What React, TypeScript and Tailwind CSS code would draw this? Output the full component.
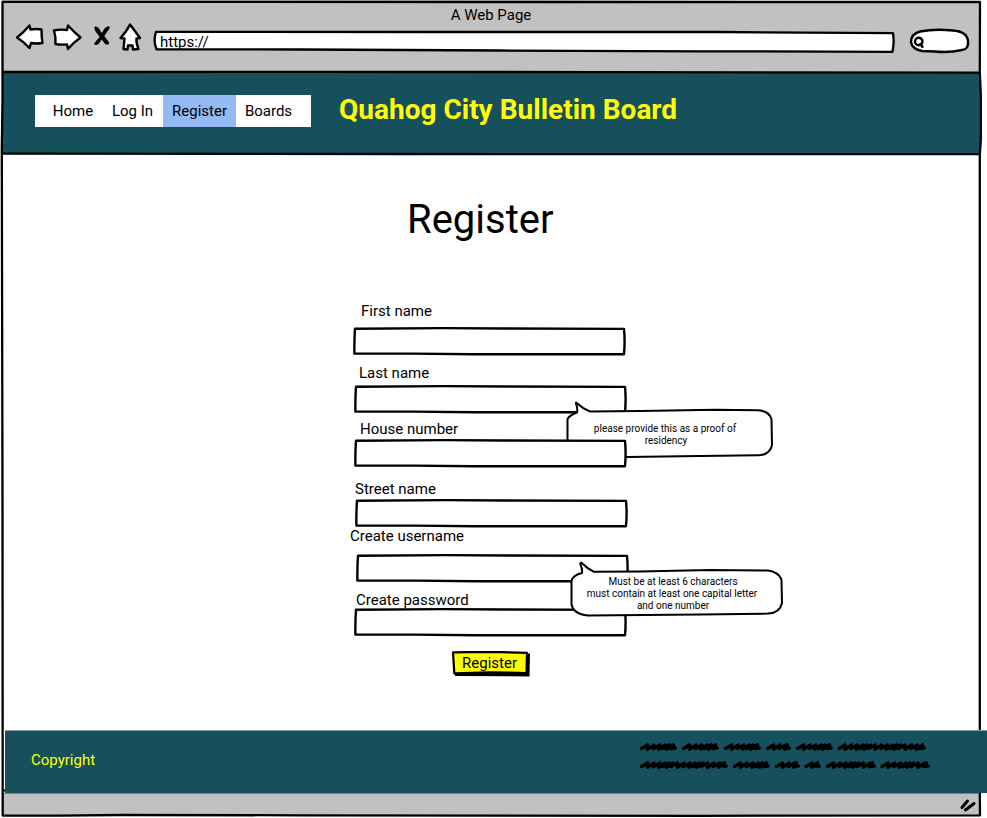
import type { ReactNode } from "react";

function Toolbar() {
  return (
    <header className="h-[72px] shrink-0 bg-[#c1c1c1]">
      <div className="flex h-[30px] items-center justify-center">
        <span className="leading-[18px]">A Web Page</span>
      </div>
      <div className="-mt-[9px] flex items-start">
        <svg className="ml-[13px] h-[34px] w-[128px] shrink-0" viewBox="15 21 128 34" fill="white" stroke="black" strokeWidth="2.4" strokeLinejoin="round" strokeLinecap="round">
          <path d="M17 37.5 Q23 33 29.5 25.5 L30.5 29.5 Q37 28.5 41.5 29.5 Q41.5 37 42.5 43 Q36 44 31 43 L29.5 48 Q24 42 17 37.5 Z" />
          <path d="M54 30.5 Q60 29 67 30 L68 25.5 Q74 32 80.5 37.5 Q74 42 68 49 L67 44.5 Q60 45 55.5 44 Q56 37 54 30.5 Z" />
          <g fill="black" stroke="none">
            <path d="M94.8 26.4 Q98.5 26.2 100.8 31.5 L103.2 34.5 L109.2 42.5 Q108.8 46 105.2 44 L101 38.5 L95.6 31.5 Q93.8 28 94.8 26.4 Z" />
            <path d="M109.7 26.4 Q110 29 107 32 L103.5 37 L98.5 44 Q95 46.3 94 43.5 L100 36.5 L104.2 29 Q106.5 25.6 109.7 26.4 Z" />
          </g>
          <path d="M130 24.5 Q135 31 140 38 L136.5 38.5 Q136 43 138.5 49 L133 49.5 L132.5 45.5 L128 45.5 L127.5 49.5 L123.5 49 Q124 43 124.5 38.5 L120.5 38 Q127 31 130 24.5 Z" />
        </svg>
        <div className="relative ml-[11px] mt-[9px] h-[22px] w-[740px] shrink-0">
          <svg className="absolute inset-0 h-full w-full overflow-visible" viewBox="154 30 740 22" fill="white" stroke="black" strokeWidth="2.3" strokeLinejoin="round">
            <path d="M156 31.8 L430 32 L720 32 L893 33.2 Q894.5 42 892.5 51.8 L700 51.3 L500 50.5 L300 49.5 L156.5 49.3 Q153 41 156 31.8 Z" />
          </svg>
          <span className="relative ml-[6px] mt-[3px] block leading-[18px]">https://</span>
        </div>
        <svg className="ml-[15px] mt-[6px] h-[28px] w-[62px] shrink-0" viewBox="909 27 62 28" fill="white" stroke="black" strokeLinecap="round">
          <path strokeWidth="2.4" d="M911 42 Q911 34 920 31.5 Q935 28.5 953 30.5 Q967 31.5 968 41 Q969 49 962 50 Q949 53 935 51.5 L922 51 Q912 49 911 42 Z" />
          <circle cx="918.7" cy="41.5" r="3.7" strokeWidth="2.4" />
          <path strokeWidth="2.6" d="M920.4 44 L922.4 46.8" />
        </svg>
      </div>
    </header>
  );
}

function NavBar() {
  return (
    <div className="flex h-[82px] shrink-0 items-start bg-[#16505d] pl-[33px] pt-[23px]">
      <nav className="flex h-8 w-[276px] shrink-0 items-center bg-white pl-[9px] leading-[18px]">
        <a className="flex h-8 w-[58px] items-center justify-center">Home</a>
        <a className="flex h-8 w-[61px] items-center justify-center">Log In</a>
        <a className="flex h-8 w-[73px] items-center justify-center bg-[#95b9f2]">Register</a>
        <a className="flex h-8 w-[65px] items-center justify-center">Boards</a>
      </nav>
      <h1 className="-mt-[2px] ml-[28px] whitespace-nowrap text-[28px] font-bold leading-[34px] text-[#ffff00]">Quahog City Bulletin Board</h1>
    </div>
  );
}

function SketchInput({ className = "" }: { className?: string }) {
  return (
    <div className={`relative h-[28px] w-[273px] ${className}`}>
      <svg className="absolute inset-0 h-full w-full overflow-visible" viewBox="0 0 273 28" fill="white" stroke="black" strokeWidth="2.4" strokeLinejoin="round">
        <path d="M2 1.7 L90 1.1 L150 1.5 L271 1.9 Q272.2 14 271 27.2 L120 27.2 L60 26.6 L1.4 26.6 Q1.2 13 2 1.7 Z" />
      </svg>
    </div>
  );
}

function Bubble({ className, path, view, children }: { className: string; path: string; view: string; children: ReactNode }) {
  return (
    <div className={`absolute text-center text-[10px] leading-[12px] ${className}`}>
      <svg className="absolute inset-0 h-full w-full overflow-visible" viewBox={view} fill="white" stroke="black" strokeWidth="2" strokeLinejoin="round" strokeLinecap="round">
        <path d={path} />
      </svg>
      <div className="relative whitespace-nowrap">{children}</div>
    </div>
  );
}

function RegisterForm() {
  return (
    <main className="h-[576px] shrink-0 bg-white leading-[18px]">
      <h2 className="ml-[407px] pt-[42px] text-[40px] leading-[48px]">Register</h2>
      <form className="ml-[350px] mt-[58px] w-[440px]">
        <label className="ml-[11px] block h-[18px]">First name</label>
        <SketchInput className="ml-[3px] mt-[7px]" />
        <label className="ml-[9px] mt-[9px] block h-[18px]">Last name</label>
        <SketchInput className="ml-[4px] mt-[3px]" />
        <div className="relative mt-[7px]">
          <Bubble
            className="-top-[18px] left-[216px] h-[56px] w-[208px] pr-[10px] pt-[21px]"
            view="566 402 208 56"
            path="M577 412.5 Q578 409 576 403.5 Q575.5 401.5 578 404 Q583 409 590 411.5 L640 411 L715 409.8 L758 410.3 Q769 411 771.5 419 L772 445 Q770 455 758 455.3 L700 456 L627 457 L590 457 Q569 456 567.5 445 L567.5 419 Q570 415 577 412.5 Z"
          >
            please provide this as a proof of
            <br />
            <span className="ml-[2px]">residency</span>
          </Bubble>
          <label className="relative ml-[10px] block h-[18px]">House number</label>
          <SketchInput className="ml-[4px] mt-px" />
        </div>
        <label className="ml-[5px] mt-[13px] block h-[18px]">Street name</label>
        <SketchInput className="ml-[5px] mt-px" />
        <label className="block h-[18px]">Create username</label>
        <SketchInput className="ml-[6px] mt-[9px]" />
        <div className="relative mt-[9px]">
          <label className="ml-[6px] block h-[18px]">Create password</label>
          <SketchInput className="-mt-px ml-[4px]" />
          <Bubble
            className="-top-[29px] left-[220px] h-[54px] w-[214px] pr-[10px] pt-[14px]"
            view="570 562 214 54"
            path="M582 573 Q582.5 569 580.5 564.5 Q580 561 583 564 Q587 568.5 594 571.8 L640 571.5 L710 570 L768 570.5 Q779 572 781.5 580 L782 603 Q780 613 768 613.6 L700 614.5 L588 615.5 Q573 614 571.5 604 L571.5 581 Q573 575 582 573 Z"
          >
            <span className="ml-[2px]">Must be at least 6 characters</span>
            <br />
            must contain at least one capital letter
            <br />
            <span className="ml-[2px]">and one number</span>
          </Bubble>
        </div>
        <button type="button" className="relative ml-[102px] mt-[15px] block h-[26px] w-[78px]">
          <svg className="absolute inset-0 h-full w-full" viewBox="452 651 78 26" strokeLinejoin="round">
            <path d="M456 654 L530 653.5 L529.5 676.5 L455 676 Z" fill="black" />
            <path d="M453 652.3 L490 651.8 L527 652.8 L526.5 673 L490 672.3 L454.3 673.3 Z" fill="#ffff00" stroke="black" strokeWidth="2.2" />
          </svg>
          <span className="relative -mt-[2px] block pr-[3px] leading-[24px]">Register</span>
        </button>
      </form>
    </main>
  );
}

/** Builds a slanted zigzag that stands for one word of handwriting. */
function scribble(start: number, end: number, y: number) {
  let x = start + 1.6;
  let d = `M${x} ${y + 1.4}`;
  let i = 0;
  while (x + 9 < end) {
    const step = [6.4, 6, 5.2, 4, 3.8, 4.6][i % 6];
    d += ` L${x + 6} ${y - 1.9} L${x + step - 0.6} ${y + 2.2 - (i % 2) * 0.6}`;
    x += step;
    i += 1;
  }
  return `${d} L${end - 3.5} ${y - 2.2} L${end - 4.5} ${y + 1.3} L${end - 1.8} ${y + 1}`;
}

const scribbleWords = [
  [640, 677, 747], [682, 719, 747], [724, 761, 747], [766, 791, 747], [796, 833, 747], [837.5, 926, 747],
  [640, 728, 765], [733, 770, 765], [775, 800, 765], [804.5, 821, 765], [826, 876, 765], [880.5, 930, 765],
];

function Footer() {
  return (
    <footer className="shrink-0">
      <div className="ml-[5px] flex h-[63px] justify-between border-t border-[#7fa0a7] bg-[#16505d]">
        <span className="ml-[26px] mt-[20px] leading-[18px] text-[#ffff00]">Copyright</span>
        <svg className="mr-[52px] mt-[9px] h-[34px] w-[295px]" viewBox="640 740 295 34" fill="none" stroke="black" strokeWidth="3.4" strokeLinejoin="round" strokeLinecap="round">
          {scribbleWords.map(([start, end, y]) => (
            <path key={`${start}-${y}`} d={scribble(start, end, y)} />
          ))}
        </svg>
      </div>
      <div className="ml-[3px] mr-[7px] flex h-[22px] justify-end border-t border-[#5f8790] bg-[#c1c1c1]">
        <svg className="h-[21px] w-[24px]" viewBox="956 794 24 21" fill="none" stroke="black" strokeWidth="3" strokeLinecap="round">
          <path d="M962 807.5 L967.5 801 M965.5 810 L974 803.5" />
        </svg>
      </div>
    </footer>
  );
}

/** Hand-inked outline of the browser window and its dividers. */
function WindowFrame() {
  return (
    <svg className="pointer-events-none absolute inset-0 h-full w-full" viewBox="0 0 987 818" fill="none" stroke="black" strokeWidth="2.3" strokeLinejoin="round">
      <path d="M979.8 730 L979.8 155 L980.8 140 L980.8 95 L979.8 72 L980 2.2 L500 2 L2.5 1.9 L2.5 100 L1.8 150 L2.5 500 L2.7 815.5 L60 815.6 L120 815 L300 815.3 L700 815.8 L980 815.3 L979.8 793" />
      <path d="M2 72 L300 71.8 L600 72.1 L980 72.7 M2 153.7 L400 154 L980 154.2 M2 790.4 H5" />
    </svg>
  );
}

export default function App() {
  return (
    <div className="relative flex h-[818px] w-[987px] flex-col overflow-hidden bg-white font-['Roboto',sans-serif] text-[15px] text-black">
      <div className="ml-[2px] mr-[7px] flex shrink-0 flex-col">
        <Toolbar />
        <NavBar />
      </div>
      <RegisterForm />
      <Footer />
      <WindowFrame />
    </div>
  );
}
